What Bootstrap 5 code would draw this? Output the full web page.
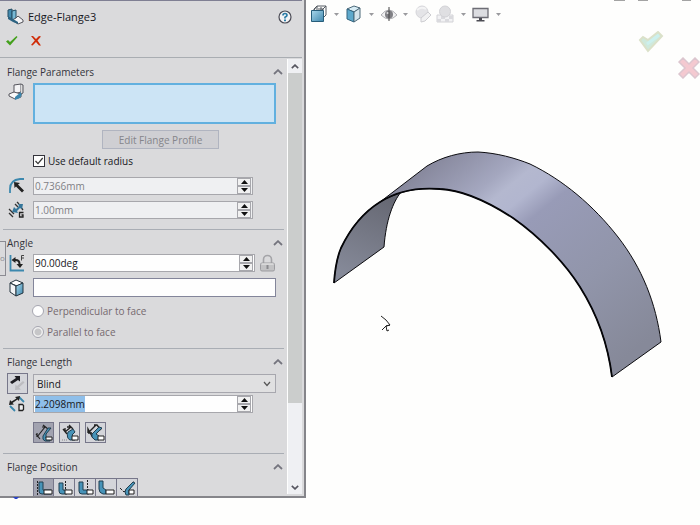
<!DOCTYPE html>
<html lang="en">
<head>
<meta charset="utf-8">
<meta name="viewport" content="width=device-width, initial-scale=1">
<title>Edge-Flange3</title>
<link href="https://cdn.jsdelivr.net/npm/bootstrap@5.3.0/dist/css/bootstrap.min.css" rel="stylesheet">
<style>
  body { font: 10px/16px "Open Sans", "Noto Sans", sans-serif; color: #17171c; background: #fefefd; overflow: hidden; }
  svg { display: block; flex: none; }
  button { font: inherit; color: inherit; padding: 0; border: 0; background: none; }
  .prop-panel { width: 306px; margin-bottom: 27px; background: #dadadc; border: solid #85858a; border-width: 0 2px 2px 0; }
  .prop-head { border-top: 1px solid #7f7f93; border-bottom: 1px solid #a9adb2; margin-right: 2px; }
  .title-row { height: 31px; padding: 0 10px 0 7px; }
  .title-row h1 { font-size: 11px; line-height: 16px; font-weight: 500; }
  .action-row { height: 25px; padding-left: 5px; gap: 10px; }
  .action-row button { width: 14px; height: 16px; }
  .prop-body { min-height: 0; }
  .sections { overflow: hidden; min-width: 0; }
  .sect { padding: 5px 0 10px 7px; margin-right: 3px; }
  .sect-short { padding-bottom: 6px; }
  .sect + .sect::before { content: ""; display: block; border-top: 1px solid #a9adb4; margin: -5px 0 5px -4px; }
  .sect:first-child { padding-top: 6px; }
  .sect-title { height: 16px; margin-bottom: 3px; padding-right: 1px; font-weight: 500; color: #34343b; }
  .sect-title h2 { font: inherit; margin: 0; }
  .line { display: grid; grid-template-columns: 26px 1fr; margin-right: 8px; }
  .line > svg { align-self: center; }
  .gap-line { margin-top: 6px; }
  .tight-line { margin-top: 1px; }
  .tool-line { margin-top: 9px; }
  .radio-line { margin-top: 3px; }
  .pick { border: 1px solid #83859a; border-radius: 0; background: #fefefe; height: 19px; padding: 0 3px; width: 100%; outline: 0; resize: none; display: block; }
  .pick-active { border: 2px solid #62b0df; background: #cce4f5; height: 41px; }
  .spin { height: 18px; border: 1px solid #a7a7ac; background: #fefefe; margin-right: 23px; }
  .spin-wide { margin-right: 0; }
  .spin input { border: 0; outline: 0; background: none; padding: 0 0 0 1px; font: inherit; line-height: 16px; min-width: 0; color: #17171c; }
  .spin input:disabled { color: #808085; }
  .spin input::selection { background: #8fbfea; color: #17171c; }
  .spin-off { background: #eff0f2; }
  .steps { width: 14px; margin-right: 1px; }
  .steps button { flex: 1; border: 1px solid #a7a7ac; background: #f1f1f1; display: grid; place-items: center; }
  .edit-row { margin: 6px 0 1px 30px; }
  .edit-btn { width: 117px; height: 19px; border: 1px solid #b0b4c0; background: #cfcfd3; color: #85858a; }
  .tick-row { height: 21px; gap: 3px; }
  .tick-row input { appearance: none; width: 12px; height: 12px; margin: 0; background: #fefefe; flex: none; }
  .tick-row input[type=checkbox] { border: 1px solid #33333b; background: #fefefe url("data:image/svg+xml,%3Csvg xmlns='http://www.w3.org/2000/svg' viewBox='0 0 10 10'%3E%3Cpath d='M1.5 5l2.5 2.6L8.7 2' fill='none' stroke='%23333' stroke-width='1.2'/%3E%3C/svg%3E"); }
  .tick-row input[type=radio] { border: 1px solid #a6a6b0; border-radius: 50%; margin-left: -1px; }
  .tick-row input[type=radio]:checked { background: radial-gradient(circle, #c6c6c8 0 3px, #f1f1f1 4px); }
  .tick-row-off { color: #75696f; }
  .end-type { appearance: none; height: 19px; width: 100%; align-self: center; padding: 0 3px; border: 1px solid #a7a7ae; border-radius: 0; color: #17171c; background: #e0e0e1 url("data:image/svg+xml,%3Csvg xmlns='http://www.w3.org/2000/svg' viewBox='0 0 8 6'%3E%3Cpath d='M1 1l3 3.500 3-3.500' fill='none' stroke='%23555' stroke-width='1.200'/%3E%3C/svg%3E") no-repeat right 4px center / 8px 6px; }
  .tool { width: 21px; height: 21px; border: 1px solid #77778a; background: #d4d5da; display: grid; place-items: center; overflow: hidden; }
  .tool-on { background: #a2a3b0; }
  .tool-set { gap: 5px; }
  .pos-tool + .pos-tool { border-left: 0; }
  .scroll-col { width: 15px; background: #eff0f3; border-left: 1px solid #fefefe; margin: 1px 2px 2px 0; }
  .scroll-col button { height: 14px; display: grid; place-items: center; }
  .thumb { background: #cbcdcc; flex: 329; }
  .track { flex: 77; }
  .side-tab { left: 0; top: 241px; width: 6px; height: 35px; border: 1px solid #8b8b92; border-left: 0; background: #dadadc; color: #8b8b92; font-size: 8px; line-height: 32px; }
  .origin-mark { left: 13px; bottom: 26px; }
  .viewport-pane { min-width: 0; }
  .view-bar { height: 28px; padding-left: 3px; }
  .view-bar .drop { width: 14px; height: 20px; display: grid; place-items: center; }
  .view-bar .apart { margin-left: 2px; }
  .win-keys { position: absolute; top: 0; right: 9px; }
  .confirm { position: absolute; top: 31px; right: 0; width: 62px; }
</style>
<script src="https://cdn.jsdelivr.net/npm/bootstrap@5.3.0/dist/js/bootstrap.bundle.min.js"></script>
</head>
<body>
<svg width="0" height="0" class="position-absolute" aria-hidden="true">
  <defs>
    <symbol id="up" viewBox="0 0 7 4"><path d="M0 4L3.500 0 7 4z" fill="#111"/></symbol>
    <symbol id="down" viewBox="0 0 7 4"><path d="M0 0L3.500 4 7 0z" fill="#111"/></symbol>
    <symbol id="chev" viewBox="0 0 10 6"><path d="M1 5l4-3.800L9 5" fill="none" stroke="#74747e" stroke-width="1.800"/></symbol>
    <symbol id="drop" viewBox="0 0 5 3"><path d="M0 0h5L2.500 3z" fill="#9a9a9e"/></symbol>
    <linearGradient id="blue" x1="0" y1="0" x2="1" y2="1"><stop offset="0" stop-color="#a9d8ec"/><stop offset="1" stop-color="#3f87ad"/></linearGradient>
    <linearGradient id="sheet" gradientUnits="userSpaceOnUse" x1="400" y1="182" x2="576" y2="398">
      <stop offset="0" stop-color="#85869a"/><stop offset=".12" stop-color="#9799b0"/><stop offset=".2" stop-color="#a4a7bf"/><stop offset=".26" stop-color="#b4b8cf"/><stop offset=".32" stop-color="#b2b6cf"/><stop offset=".4" stop-color="#989bb7"/><stop offset=".7" stop-color="#9195aa"/><stop offset="1" stop-color="#868999"/>
    </linearGradient>
    <linearGradient id="inside" gradientUnits="userSpaceOnUse" x1="385" y1="195" x2="350" y2="275"><stop offset="0" stop-color="#666873"/><stop offset="1" stop-color="#858998"/></linearGradient>
  </defs>
</svg>

<div class="d-flex vh-100 position-relative">
  <aside class="prop-panel d-flex flex-column flex-shrink-0">
    <header class="prop-head">
      <div class="title-row d-flex align-items-center">
        <svg width="17" height="17" viewBox="0 0 17 17"><path d="M1 2l4-1v10l-4-2z" fill="#438aae" stroke="#244d63"/><path d="M5 3l4-1v9l-4 1z" fill="#78b9d5" stroke="#244d63"/><path d="M5 12l4-2 2-2 5 4v2l-5 2z" fill="#f3f3f5" stroke="#55555c"/><path d="M1 9l5 2 5 3v2l-5-2-5-3z" fill="#2d6382"/></svg>
        <h1 class="mb-0 ms-1 flex-grow-1">Edge-Flange3</h1>
        <button type="button" aria-label="Help"><svg width="14" height="14" viewBox="0 0 14 14"><circle cx="7" cy="7" r="6" fill="#f4f4f6" stroke="#4b4b55" stroke-width="1.200"/><path d="M5 5.500Q5 3.500 7 3.500T9 5.300Q9 6.400 7 7.300V8.500" fill="none" stroke="#2a7ba6" stroke-width="1.700"/><path d="M6 9.600h2v1.600H6z" fill="#2a7ba6"/></svg></button>
      </div>
      <div class="action-row d-flex align-items-start">
        <button type="button" aria-label="OK"><svg width="14" height="15" viewBox="0 0 14 15"><path d="M1 8.500l2-1.500 2 2 6.500-6 1 1-7.500 8.500z" fill="#43a01c"/></svg></button>
        <button type="button" aria-label="Cancel"><svg width="14" height="15" viewBox="0 0 14 15"><path d="M2 3l2 0 3 3 3-3 2 .5-3.500 4 3.500 5h-2L7 9l-3.500 3.500-1.500-.5 3.800-4.500z" fill="#d02c08"/></svg></button>
      </div>
    </header>

    <div class="prop-body d-flex flex-grow-1">
      <form class="sections flex-grow-1">
        <section class="sect">
          <div class="sect-title d-flex justify-content-between align-items-center"><h2>Flange Parameters</h2><button type="button" aria-label="Collapse Flange Parameters"><svg width="10" height="6"><use href="#chev"/></svg></button></div>
          <div class="line">
            <svg class="align-self-start" width="20" height="18" viewBox="0 0 20 18"><path d="M7 2l7-1v8l-7 2z" fill="#f4f4f6" stroke="#54545c"/><path d="M2 11l5-2 7 2v3l-6 2-6-3z" fill="#fafafa" stroke="#54545c"/><path d="M8 14l6-5 1 2-2 4-5 2z" fill="#3c86ad"/><path d="M14 1l2 1v8l-2 1" fill="#ddd" stroke="#54545c"/></svg>
            <textarea class="pick pick-active" aria-label="Edges"></textarea>
          </div>
          <div class="edit-row d-flex justify-content-center"><button type="button" class="edit-btn" disabled>Edit Flange Profile</button></div>
          <div class="line"><span></span><div class="tick-row d-flex align-items-center"><input type="checkbox" id="def" checked><label for="def">Use default radius</label></div></div>
          <div class="line gap-line">
            <svg width="20" height="18" viewBox="0 0 20 18"><path d="M3 16V12Q3 3 13 2h4" fill="none" stroke="#3c88ae" stroke-width="1.800"/><path d="M7 5l6 1-2 1.500 6 6-2 2-6-6L7.500 11z" fill="#222"/></svg>
            <div class="spin spin-off d-flex"><input class="flex-grow-1" value="0.7366mm" aria-label="Bend radius" disabled><span class="steps d-flex flex-column"><button type="button" aria-label="Increase"><svg width="7" height="4"><use href="#up"/></svg></button><button type="button" aria-label="Decrease"><svg width="7" height="4"><use href="#down"/></svg></button></span></div>
          </div>
          <div class="line gap-line">
            <svg width="20" height="18" viewBox="0 0 20 18"><path d="M2 8l5 5M2 12l4 4M8 3l3 3M13 5l3 4M10 1l2 2" stroke="#333" stroke-width="1.300" fill="none"/><path d="M5 11l2-5 2 2 3-3-1-2 5 0-1 5-2-1-3 3 1 2z" fill="#35769a"/><path d="M16.500 11.500h-4v4.500h3.500v-2H14.500" fill="none" stroke="#222" stroke-width="1.300"/></svg>
            <div class="spin spin-off d-flex"><input class="flex-grow-1" value="1.00mm" aria-label="Gap distance" disabled><span class="steps d-flex flex-column"><button type="button" aria-label="Increase"><svg width="7" height="4"><use href="#up"/></svg></button><button type="button" aria-label="Decrease"><svg width="7" height="4"><use href="#down"/></svg></button></span></div>
          </div>
        </section>

        <section class="sect sect-short">
          <div class="sect-title d-flex justify-content-between align-items-center"><h2>Angle</h2><button type="button" aria-label="Collapse Angle"><svg width="10" height="6"><use href="#chev"/></svg></button></div>
          <div class="line">
            <svg width="20" height="18" viewBox="0 0 20 18"><path d="M3.500 1v15.500H17" fill="none" stroke="#3c88ae" stroke-width="1.800"/><path d="M4.500 6l4-3v2q5 0 5 5h2.500l-3 4-3.500-4h2q0-3-3-3v2z" fill="#222"/><path d="M17 1.500h-2.500v5M14.500 4H17" fill="none" stroke="#444"/></svg>
            <div class="d-flex align-items-center">
              <div class="spin spin-wide d-flex flex-grow-1"><input class="flex-grow-1" value="90.00deg" aria-label="Flange angle"><span class="steps d-flex flex-column"><button type="button" aria-label="Increase"><svg width="7" height="4"><use href="#up"/></svg></button><button type="button" aria-label="Decrease"><svg width="7" height="4"><use href="#down"/></svg></button></span></div>
              <button type="button" class="ms-1" aria-label="Lock angle"><svg width="17" height="18" viewBox="0 0 17 18"><path d="M4.500 9V5.500a4 4 0 0 1 8 0V9" fill="none" stroke="#a4a4a8" stroke-width="1.600"/><rect x="1.500" y="9" width="14" height="8" rx="1.500" fill="#c2c2c4" stroke="#9c9ca0"/><path d="M7.500 11h2v4h-2z" fill="#8a8a8e"/><path d="M2.500 10h12" stroke="#eee"/></svg></button>
            </div>
          </div>
          <div class="line gap-line">
            <svg width="20" height="18" viewBox="0 0 20 18"><path d="M3 4l6-3 7 3-6 3z" fill="#fff" stroke="#24343e"/><path d="M3 4l6 3v10l-6-4z" fill="#f2f4f6" stroke="#24343e"/><path d="M9 7l7-3v10l-7 3z" fill="url(#blue)" stroke="#24343e"/></svg>
            <input class="pick" aria-label="Reference face">
          </div>
          <div class="line radio-line"><span></span><div><div class="tick-row tick-row-off d-flex align-items-center"><input type="radio" name="face" id="perp" disabled><label for="perp">Perpendicular to face</label></div>
          <div class="tick-row tick-row-off d-flex align-items-center"><input type="radio" name="face" id="par" checked disabled><label for="par">Parallel to face</label></div></div></div>
        </section>

        <section class="sect">
          <div class="sect-title d-flex justify-content-between align-items-center"><h2>Flange Length</h2><button type="button" aria-label="Collapse Flange Length"><svg width="10" height="6"><use href="#chev"/></svg></button></div>
          <div class="line">
            <button type="button" class="tool" aria-label="Reverse direction"><svg width="19" height="19" viewBox="0 0 19 19"><path d="M2 8l6-4-1.500-2H12v5.500L10 6 4 10z" fill="#1d1d22"/><path d="M15 7l-6 5-1.500-1.500L7 16l6-.5-2-2 5.500-5z" fill="#bcbcc0"/></svg></button>
            <select class="end-type" aria-label="Length end condition"><option>Blind</option></select>
          </div>
          <div class="line tight-line">
            <svg width="20" height="18" viewBox="0 0 20 18"><path d="M3 11l5 5M12 2l5 5" stroke="#3c88ae" stroke-width="1.800"/><path d="M2 10l1-5 1.500 1.500 5-3L8 2l5-1-1 5-1.500-1.500-5 3.500L7 9.500z" fill="#222"/><path d="M12 9.500h3.500l1 1v4l-1 1H12z" fill="#eee" stroke="#222" stroke-width="1.300"/></svg>
            <div class="spin d-flex"><input id="len" class="flex-grow-1" value="2.2098mm" aria-label="Length"><span class="steps d-flex flex-column"><button type="button" aria-label="Increase"><svg width="7" height="4"><use href="#up"/></svg></button><button type="button" aria-label="Decrease"><svg width="7" height="4"><use href="#down"/></svg></button></span></div>
          </div>
          <div class="line tool-line"><span></span><div class="tool-set d-flex">
            <button type="button" class="tool tool-on" aria-label="Outer virtual sharp"><svg width="19" height="19" viewBox="0 0 19 19"><path d="M3 14L11 4M2 11l4 5M9 2l5 4M3 14v-4M11 4H8" stroke="#222" fill="none" stroke-width="1.200"/><path d="M17 5l-5 6v4h4v3h-5q-3-1-2-5l5-8z" fill="#4793b8" stroke="#213f50"/><path d="M12 14h6v3h-6z" fill="#fff" stroke="#222"/></svg></button>
            <button type="button" class="tool" aria-label="Inner virtual sharp"><svg width="19" height="19" viewBox="0 0 19 19"><path d="M5 9l6-5M3 6l4 5M9 2l4 4M5 9V5M11 4H7" stroke="#222" fill="none" stroke-width="1.300"/><path d="M8 9l5-3 2 3-3 3 1 2h2v3h-5q-4-2-2-8z" fill="#4793b8" stroke="#213f50"/><path d="M12 13h6v4h-6z" fill="#fff" stroke="#222"/><path d="M2 17h6" stroke="#888" stroke-dasharray="1 1"/></svg></button>
            <button type="button" class="tool" aria-label="Tangent bend"><svg width="19" height="19" viewBox="0 0 19 19"><path d="M2 10l8-8M2 10h4M2 10V6l5 9M8 2h3l4 5" stroke="#222" fill="none" stroke-width="1.400"/><path d="M16 5l-6 6 3 2v4h-4l-3-3v-3l7-7z" fill="#4793b8" stroke="#213f50"/><path d="M12 13h6v4h-6z" fill="#fff" stroke="#222"/></svg></button>
          </div></div>
        </section>

        <section class="sect">
          <div class="sect-title d-flex justify-content-between align-items-center"><h2>Flange Position</h2><button type="button" aria-label="Collapse Flange Position"><svg width="10" height="6"><use href="#chev"/></svg></button></div>
          <div class="line"><span></span><div class="d-flex">
            <button type="button" class="tool tool-on pos-tool" aria-label="Material inside"><svg width="19" height="19" viewBox="0 0 19 19"><path d="M3.500 2v14" stroke="#222" stroke-dasharray="2 1"/><path d="M5 3h4v8h8v4H8q-3 0-3-3z" fill="#4793b8" stroke="#213f50"/><path d="M10 11h8v4h-8z" fill="#fff" stroke="#222"/></svg></button>
            <button type="button" class="tool pos-tool" aria-label="Material outside"><svg width="19" height="19" viewBox="0 0 19 19"><path d="M10.500 2v9" stroke="#222" stroke-dasharray="2 1"/><path d="M4 4h4v7h4v4H7q-3 0-3-3z" fill="#4793b8" stroke="#213f50"/><path d="M10 11h7v4h-7z" fill="#fff" stroke="#222"/></svg></button>
            <button type="button" class="tool pos-tool" aria-label="Bend outside"><svg width="19" height="19" viewBox="0 0 19 19"><path d="M11.500 1v10" stroke="#222" stroke-dasharray="2 1"/><path d="M3 3h4v8h6v4H6q-3 0-3-3z" fill="#4793b8" stroke="#213f50"/><path d="M11 11h6v4h-6z" fill="#fff" stroke="#222"/></svg></button>
            <button type="button" class="tool pos-tool" aria-label="Bend from virtual sharp"><svg width="19" height="19" viewBox="0 0 19 19"><path d="M2 2h4v7l3 2v4H6q-4-1-4-5z" fill="#4793b8" stroke="#213f50"/><path d="M9 11h8v4H9z" fill="#fff" stroke="#222"/></svg></button>
            <button type="button" class="tool pos-tool" aria-label="Tangent to bend"><svg width="19" height="19" viewBox="0 0 19 19"><path d="M2 9l4 4L16 2" fill="none" stroke="#222" stroke-dasharray="3 1"/><path d="M17 4l-6 7v5H8q-2-3 0-6l7-7z" fill="#4793b8" stroke="#213f50"/><path d="M11 11h5v4h-5z" fill="#fff" stroke="#222"/></svg></button>
          </div></div>
        </section>
      </form>

      <div class="scroll-col d-flex flex-column flex-shrink-0">
        <button type="button" aria-label="Scroll up"><svg width="8" height="5" viewBox="0 0 10 6"><path d="M1 5l4-3.800L9 5" fill="none" stroke="#55555f" stroke-width="2"/></svg></button>
        <div class="thumb"></div><div class="track"></div>
        <button type="button" aria-label="Scroll down"><svg width="8" height="5" viewBox="0 0 10 6"><path d="M1 1l4 3.800L9 1" fill="none" stroke="#55555f" stroke-width="2"/></svg></button>
      </div>
    </div>
  </aside>

  <div class="side-tab position-absolute">o</div>
  <svg class="origin-mark position-absolute" width="6" height="2" viewBox="0 0 6 2" aria-hidden="true"><path d="M0 0h6L4 2H2z" fill="#2b45c8"/></svg>

  <main class="viewport-pane flex-grow-1 d-flex flex-column position-relative">
    <nav class="view-bar d-flex align-items-center" aria-label="View">
      <button type="button" aria-label="View orientation"><svg width="20" height="18" viewBox="0 0 20 18"><path d="M5 5V4l3-3h9v9l-3 3M8 1v8M5 5l3-4M17 1l-4 4M12 2v4M9 4h6" fill="none" stroke="#555b62"/><path d="M2.500 5.500h12v11h-12z" fill="url(#blue)" stroke="#275d7a"/></svg></button>
      <span class="drop"><svg width="5" height="3"><use href="#drop"/></svg></span>
      <button type="button" aria-label="Display style"><svg width="21" height="18" viewBox="0 0 21 18"><path d="M4 4l7-3 6 2-6 4z" fill="#d7ecf5" stroke="#4b6878"/><path d="M4 4l7 3v10l-7-3z" fill="#5ea9cc" stroke="#34647e"/><path d="M11 7l6-4v10l-6 4z" fill="#d5e4ec" stroke="#4b6878"/></svg></button>
      <span class="drop"><svg width="5" height="3"><use href="#drop"/></svg></span>
      <button type="button" class="apart" aria-label="Hide or show items"><svg width="18" height="16" viewBox="0 0 18 16"><path d="M1 9q8-10 16 0-8 8-16 0z" fill="#f1f1f2" stroke="#b0b0b4"/><circle cx="9" cy="8.500" r="4" fill="#808085"/><path d="M9 1v14" stroke="#444"/><circle cx="7.500" cy="7" r="1" fill="#ddd"/></svg></button>
      <span class="drop"><svg width="5" height="3"><use href="#drop"/></svg></span>
      <button type="button" class="apart" aria-label="Edit appearance" disabled><svg width="18" height="18" viewBox="0 0 18 18"><circle cx="8" cy="7" r="6" fill="#e4e4e7" stroke="#d6d6da"/><path d="M3 5q4-4 9-1" stroke="#f4f4f5" fill="none" stroke-width="2"/><path d="M7 13l7-6 3 3-6 6-4 1z" fill="#f1f1f2" stroke="#cdcdd1"/></svg></button>
      <button type="button" class="ms-1" aria-label="Apply scene" disabled><svg width="18" height="18" viewBox="0 0 18 18"><path d="M1 10h16v7H1z" fill="#f2f2f4" stroke="#d2d2d6"/><path d="M1 14h4v3H1zM9 14h4v3H9zM5 11h4v3H5zM13 11h4v3h-4z" fill="#dadade"/><circle cx="9" cy="6.500" r="5.500" fill="#dfdfe2" stroke="#d2d2d6"/></svg></button>
      <span class="drop apart"><svg width="5" height="3"><use href="#drop"/></svg></span>
      <button type="button" class="apart" aria-label="View settings"><svg width="17" height="15" viewBox="0 0 17 15"><path d="M1 1.500h15v9H1z" fill="#dcdde1" stroke="#6d6d75" stroke-width="1.300"/><path d="M7 11h3v2h2.500v1.500h-8V13H7z" fill="#4c4c54"/></svg></button>
      <span class="drop apart"><svg width="5" height="3"><use href="#drop"/></svg></span>
    </nav>
    <svg class="flex-grow-1 w-100" viewBox="306 28 394 497" preserveAspectRatio="xMinYMin meet" height="1" role="img" aria-label="Curved sheet metal part">
      <path d="M334 283C335 268 338 255 341 248C352 225 364 212 380 202C387 197 394 194 401 192C393 202 386 220 384 247z" fill="url(#inside)" stroke="#0b0b0f" stroke-linejoin="round"/>
      <path d="M380 202L427 166C442 157 460 152 478 152C497 153 515 158 530 164C563 180 593 205 618 237C642 268 656 303 661 342L612 377C608 344 597 314 580 287C565 263 540 237 513 218C490 203 463 190 440 189C416 187 397 192 380 202z" fill="url(#sheet)" stroke="#0b0b0f"/>
      <path d="M334 283C335 268 338 255 341 248C352 225 364 212 380 202C397 191 416 187 440 189C463 190 490 203 513 218C540 237 565 263 580 287C597 314 608 344 612 377" fill="none" stroke="#050508" stroke-width="1.800"/>
      <path d="M381 316l5 4 4 5-4 1M382 330l4-4 1 5 2-1M386 326l4-1" fill="none" stroke="#222"/>
    </svg>
    <svg class="win-keys" width="77" height="1" viewBox="0 0 77 1" aria-hidden="true"><path d="M0 0h11v1H0zM24 0h10v1H24zM68 0h9v1h-9z" fill="#a3a3a3"/></svg>
    <div class="confirm d-flex flex-column">
      <button type="button" class="align-self-start" aria-label="Accept"><svg width="26" height="22" viewBox="0 0 26 22"><path d="M2 9l3-3 5 3 10-8 4 4-14 15z" fill="#cfe9dc" stroke="#dbe1c9" stroke-width="2"/><path d="M9 13l12-9" stroke="#ccf0ee" stroke-width="3"/></svg></button>
      <button type="button" class="align-self-end mt-1" aria-label="Discard"><svg width="23" height="22" viewBox="0 0 23 22"><path d="M2 5l4-4 6 6 6-6 4 4-6 6 6 6-4 4-6-6-6 6-4-4 6-6z" fill="#f4c9d0" stroke="#dcc6cf" stroke-width="1.500"/></svg></button>
    </div>
  </main>
</div>
<script>
  document.getElementById("len").focus();
  document.getElementById("len").select();
</script>
</body>
</html>
